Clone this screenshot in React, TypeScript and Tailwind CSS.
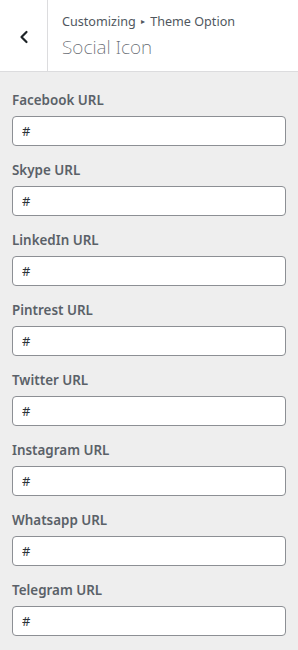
const fields = [
  'Facebook URL',
  'Skype URL',
  'LinkedIn URL',
  'Pintrest URL',
  'Twitter URL',
  'Instagram URL',
  'Whatsapp URL',
  'Telegram URL',
]

function BackIcon() {
  return (
    <svg width="20" height="20" viewBox="0 0 20 20" className="text-[#1d2327]">
      <path d="M12.5 5 7.5 10l5 5" fill="none" stroke="currentColor" strokeWidth="2.2" strokeLinecap="round" strokeLinejoin="round" />
    </svg>
  )
}

export default function App() {
  return (
    <div className="w-[298px] h-[650px] bg-[#eeeeee] overflow-hidden font-['Noto_Sans',sans-serif]">
      <div className="flex h-[72px] bg-white border-b border-[#dcdcde]">
        <button className="w-[48px] flex items-center justify-center border-r border-[#dcdcde] shrink-0 pt-[2px]">
          <BackIcon />
        </button>
        <div className="pl-[14px] pt-[11px]">
          <div className="text-[12.6px] leading-[20px] text-[#50575e]">
            Customizing <span className="text-[8px] align-[2px] mx-[2px]">▸</span> Theme Option
          </div>
          <div className="text-[19px] leading-[28px] font-extralight text-[#646970] mt-[1px]">Social Icon</div>
        </div>
      </div>
      <div className="px-[12px] pt-[18px] flex flex-col gap-[14px]">
        {fields.map((f) => (
          <div key={f} className="flex flex-col gap-[6px]">
            <label className="text-[13.4px] leading-[20px] font-semibold text-[#5a6168]">{f}</label>
            <input
              type="text"
              defaultValue="#"
              className="h-[30px] w-full bg-white border border-[#8c8f94] rounded-[4px] px-[9px] text-[13px] text-[#2c3338] outline-none"
            />
          </div>
        ))}
      </div>
    </div>
  )
}
